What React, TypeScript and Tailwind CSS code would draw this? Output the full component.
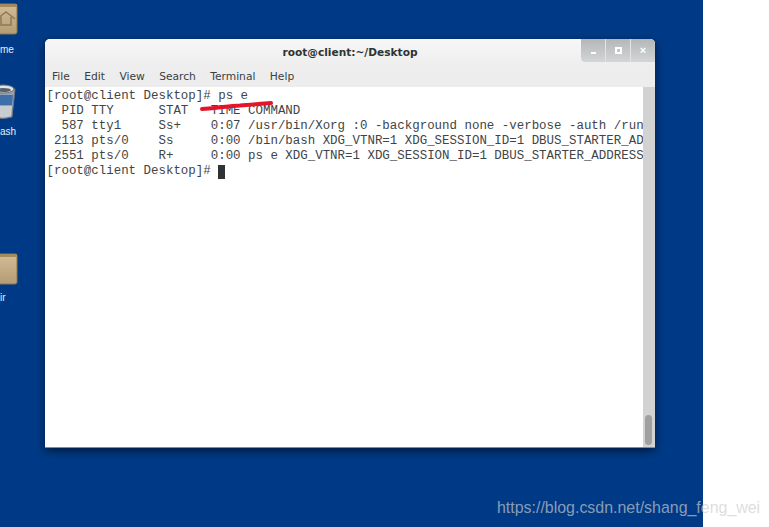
import React from 'react';

const menus = ['File', 'Edit', 'View', 'Search', 'Terminal', 'Help'];

const lines = [
  '[root@client Desktop]# ps e',
  '  PID TTY      STAT   TIME COMMAND',
  '  587 tty1     Ss+    0:07 /usr/bin/Xorg :0 -background none -verbose -auth /run',
  ' 2113 pts/0    Ss     0:00 /bin/bash XDG_VTNR=1 XDG_SESSION_ID=1 DBUS_STARTER_AD',
  ' 2551 pts/0    R+     0:00 ps e XDG_VTNR=1 XDG_SESSION_ID=1 DBUS_STARTER_ADDRESS',
];

function Folder({ home }: { home?: boolean }) {
  return (
    <svg width="34" height="32" viewBox="0 0 34 32">
      <defs>
        <linearGradient id={home ? 'fh' : 'fd'} x1="0" y1="0" x2="0" y2="1">
          <stop offset="0" stopColor="#d3bd97" />
          <stop offset="1" stopColor="#b49c74" />
        </linearGradient>
      </defs>
      <rect x="-8" y="1" width="25" height="30" rx="2" fill={`url(#${home ? 'fh' : 'fd'})`} stroke="#8f7648" />
      <rect x="-8" y="1" width="25" height="3" fill="#a58a5c" />
      {home && <path d="M-3 16 L6 9 L15 16 M1 14 V22 H11 V14" fill="none" stroke="#8c7a5c" strokeWidth="1.5" />}
    </svg>
  );
}

function Trash() {
  return (
    <svg width="18" height="38" viewBox="0 0 18 38">
      <path d="M-8 6 L15 6 L12 34 Q2 37 -6 34 Z" fill="#8fa3ba" stroke="#777" />
      <path d="M-6 12 L13 12 L12 22 L-5 22 Z" fill="#3f6ea8" />
      <path d="M-6 23 L12 23 L11 33 Q2 36 -5 33 Z" fill="#c9ccd0" />
      <ellipse cx="3" cy="6" rx="11" ry="4" fill="#dfe3e6" stroke="#6e6e6e" />
      <ellipse cx="3" cy="7" rx="8" ry="2" fill="#58626e" />
    </svg>
  );
}

function DesktopLabel({ text, className }: { text: string; className: string }) {
  return (
    <span className={`absolute left-0 text-[10px] leading-[13px] text-[#e8edf5] font-['Liberation_Sans',sans-serif] ${className}`}>
      {text}
    </span>
  );
}

export default function App() {
  return (
    <div className="relative h-[527px] w-[769px] overflow-hidden bg-white">
      <div className="relative h-full w-[703px] bg-[#003a86]">
        {/* desktop icons */}
        <div className="absolute left-0 top-[3px]"><Folder home /></div>
        <DesktopLabel text="me" className="top-[43px]" />
        <div className="absolute left-0 top-[83px]"><Trash /></div>
        <DesktopLabel text="ash" className="top-[125px]" />
        <div className="absolute left-0 top-[253px]"><Folder /></div>
        <DesktopLabel text="ir" className="top-[291px]" />

        {/* terminal window */}
        <div className="absolute left-[45px] top-[39px] flex h-[409px] w-[610px] flex-col overflow-hidden rounded-t-[5px] border-b border-[#8a8a8a] bg-white shadow-[0_3px_10px_rgba(0,0,0,0.55)] font-['Liberation_Sans',sans-serif]">
          <div className="relative flex h-[26px] shrink-0 items-center justify-center bg-gradient-to-b from-[#f7f7f7] to-[#eeeeee] pt-[2px]">
            <span className="text-[10.6px] font-bold text-[#2e3436] font-['DejaVu_Sans',sans-serif]">root@client:~/Desktop</span>
            <div className="absolute right-0 top-0 flex h-[23px] w-[74px] rounded-bl-[4px] bg-gradient-to-b from-[#b4b7b8] to-[#d3d5d6] text-white">
              <div className="flex w-[25px] items-end justify-center border-r border-[#e3e4e4] pb-[8px]">
                <div className="h-[2px] w-[5px] bg-white" />
              </div>
              <div className="flex w-[25px] items-center justify-center border-r border-[#e3e4e4]">
                <div className="h-[7px] w-[7px] border-2 border-white" />
              </div>
              <div className="flex flex-1 items-center justify-center text-[11px] font-bold leading-none">×</div>
            </div>
          </div>
          <div className="flex h-[22px] shrink-0 items-center gap-[14.4px] bg-[#ededed] pl-[7px] pt-[3px] text-[10.7px] text-[#3a3f41] font-['DejaVu_Sans',sans-serif]">
            {menus.map((m) => (
              <span key={m}>{m}</span>
            ))}
          </div>
          <div className="relative flex min-h-0 flex-1">
            <div className="min-w-0 flex-1 overflow-hidden pl-[1.5px] pt-[2px] font-['Liberation_Mono',monospace] text-[12.45px] leading-[15px] text-[#3f4547]">
              {lines.map((l) => (
                <div key={l} className="h-[15px] whitespace-pre">{l}</div>
              ))}
              <div className="flex h-[15px] items-center whitespace-pre">
                <span>{'[root@client Desktop]# '}</span>
                <span className="h-[14px] w-[7px] bg-[#2e3436]" />
              </div>
            </div>
            <div className="flex w-[12px] shrink-0 flex-col justify-end bg-[#d2d2d2] pb-[2px] pl-[2px]">
              <div className="h-[30px] w-[7px] rounded-full bg-[#a0a0a0]" />
            </div>
            {/* red pen mark */}
            <svg className="absolute left-[150px] top-[11px]" width="80" height="16" viewBox="0 0 80 16">
              <path d="M7 11 C25 10 32 8 45 7.5 C55 6.5 65 6 76 5" fill="none" stroke="#e5142a" strokeWidth="4" strokeLinecap="round" />
            </svg>
          </div>
        </div>
      </div>
      {/* watermark */}
      <span className="absolute left-[497px] top-[499px] text-[15.95px] leading-[18px] whitespace-nowrap text-[rgba(205,205,205,0.68)] font-['Liberation_Sans',sans-serif]">
        https://blog.csdn.net/shang_feng_wei
      </span>
    </div>
  );
}
